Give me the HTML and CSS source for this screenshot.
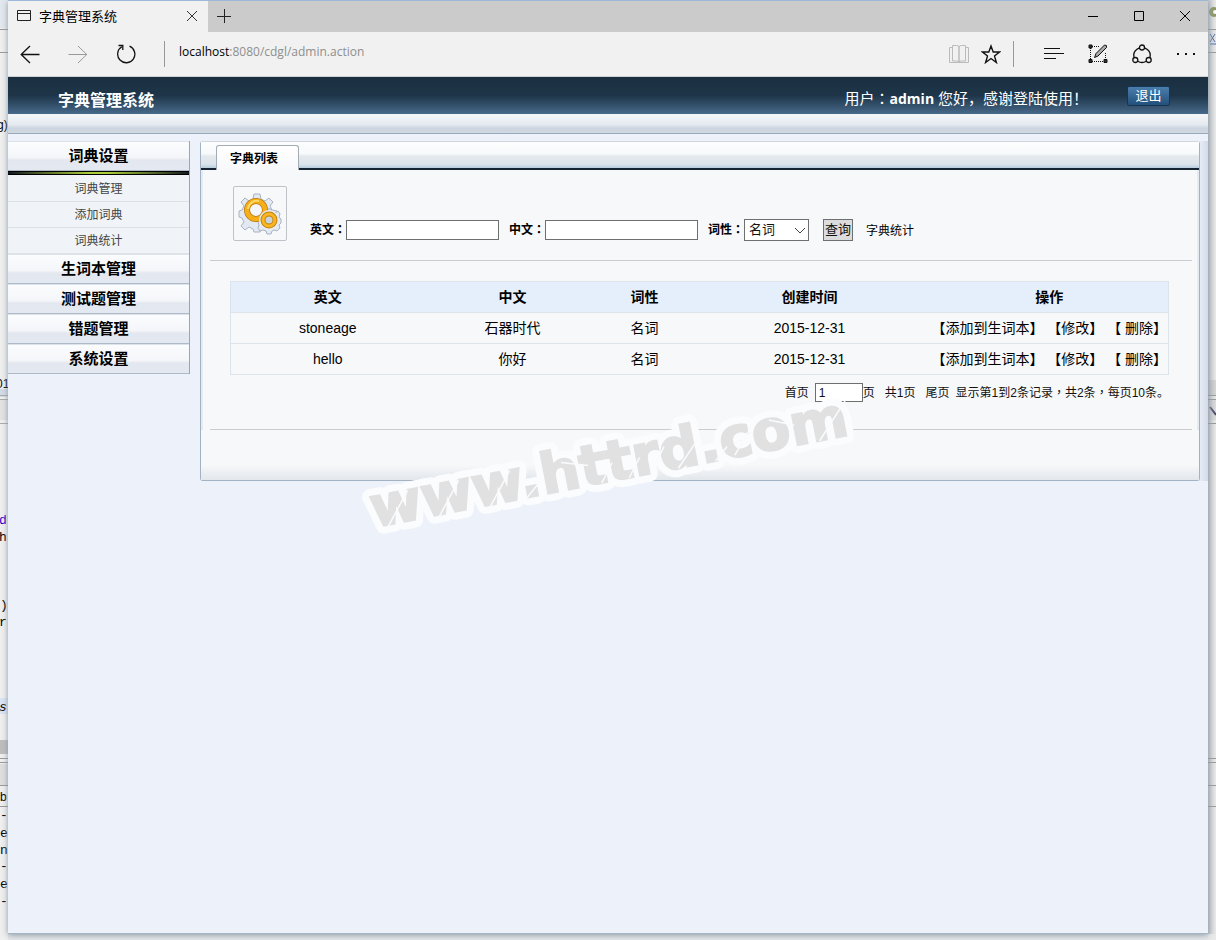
FILE: index.html
```html
<!DOCTYPE html>
<html lang="zh-CN">
<head>
<meta charset="utf-8">
<title>字典管理系统</title>
<link rel="stylesheet" href="styles.css">
</head>
<body>
<div class="desktop">
  <svg class="strip" viewBox="0 0 8 940" width="8" height="940" aria-hidden="true">
    <rect width="8" height="940" fill="#efefef"/>
    <rect width="8" height="28" fill="#e2e8ee"/>
    <path d="M0 29.5h8M0 52.5h8" stroke="#999"/>
    <rect y="389" width="8" height="8" fill="#d3dbe6"/>
    <rect y="400" width="8" height="20" fill="#e2e2e2"/>
    <path d="M0 395.5h8M0 399.5h8M0 423.5h8" stroke="#aaa"/>
    <rect y="698" width="8" height="16" fill="#dae4f3"/>
    <rect y="740" width="8" height="14" fill="#bdbdbd"/>
    <rect y="764" width="8" height="22" fill="#dedede"/>
    <path d="M0 758.5h8M0 762.5h8M0 785.5h8M0 806.5h8" stroke="#999"/>
    <g font-family="Liberation Sans, sans-serif" font-size="12"><text x="-3" y="129">g)</text><text x="-4" y="388">01</text><text x="0" y="801">b</text></g>
    <g font-family="Liberation Mono, monospace" font-size="13"><text x="-1" y="524" fill="#2a00c8">d</text><text x="-1" y="541">h</text><text x="0" y="609">)</text><text x="-1" y="626">r</text><text x="-1" y="711" font-style="italic">s</text><text x="0" y="819">-</text><text x="0" y="837">e</text><text x="0" y="854">n</text><text x="0" y="870">-</text><text x="0" y="888">e</text><text x="0" y="905">-</text></g>
  </svg>
  <div class="window">
    <div class="tabbar">
      <div class="tab">
        <svg width="14" height="13" viewBox="0 0 14 13" fill="none" stroke="#222"><path d="M.5 1.500h13v10H.5zM.5 4.500h13"/></svg>
        <span class="tab-title">字典管理系统</span>
        <button class="icon-btn" aria-label="关闭标签页"><svg width="12" height="12" viewBox="0 0 12 12" fill="none" stroke="#333"><path d="M1 1l10 10M11 1L1 11"/></svg></button>
      </div>
      <button class="icon-btn new-tab" aria-label="新建标签页"><svg width="14" height="14" viewBox="0 0 14 14" fill="none" stroke="#222"><path d="M7.500 0v14M0 7.500h14"/></svg></button>
      <div class="win-controls">
        <button class="icon-btn" aria-label="最小化"><svg width="12" height="12" viewBox="0 0 12 12" stroke="#000"><path d="M1 6.500h10"/></svg></button>
        <button class="icon-btn" aria-label="最大化"><svg width="12" height="12" viewBox="0 0 12 12" fill="none" stroke="#000"><path d="M1.500 1.500h9v9h-9z"/></svg></button>
        <button class="icon-btn" aria-label="关闭"><svg width="12" height="12" viewBox="0 0 12 12" fill="none" stroke="#000"><path d="M1 1l10 10M11 1L1 11"/></svg></button>
      </div>
    </div>
    <div class="toolbar">
      <div class="nav">
        <button class="icon-btn" aria-label="后退"><svg width="20" height="20" viewBox="0 0 20 20" fill="none" stroke="#111" stroke-width="1.300"><path d="M19.500 10.500H1M10 2L1.200 10.500l8.800 8.500"/></svg></button>
        <button class="icon-btn" aria-label="前进"><svg width="20" height="20" viewBox="0 0 20 20" fill="none" stroke="#999"><path d="M.5 10.500H19M10 2l8.800 8.500L10 19"/></svg></button>
        <button class="icon-btn" aria-label="刷新"><svg width="20" height="20" viewBox="0 0 20 20" fill="none" stroke="#111" stroke-width="1.300"><path d="M13.500 2.200A8.600 8.600 0 1 1 5.800 2.800M2.500 1.500h4.300v4.400"/></svg></button>
      </div>
      <i class="divider"></i>
      <div class="address">localhost<span class="path">:8080/cdgl/admin.action</span></div>
      <div class="page-tools">
        <button class="icon-btn" aria-label="阅读视图"><svg width="20" height="20" viewBox="0 0 20 20" fill="none" stroke="#bbb"><path d="M3.500 1.500h4q2.500 0 2.500 1.500v15q0-1-2.500-1h-4zM16.500 1.500h-4Q10 1.500 10 3v15q0-1 2.500-1h4zM3.500 3.500h-3v15h19v-15h-3"/></svg></button>
        <button class="icon-btn" aria-label="收藏"><svg width="20" height="20" viewBox="0 0 20 20" fill="none" stroke="#111" stroke-width="1.400"><path d="M10 2l2.200 6h6.300l-5 4 1.900 6.500-5.400-4-5.400 4 1.900-6.500-5-4h6.300z"/></svg></button>
      </div>
      <i class="divider"></i>
      <div class="menu-tools">
        <button class="icon-btn" aria-label="中心"><svg width="20" height="20" viewBox="0 0 20 20" stroke="#111"><path d="M0 4.500h16M0 9.500h20M0 14.500h12"/></svg></button>
        <button class="icon-btn" aria-label="做笔记"><svg width="20" height="20" viewBox="0 0 20 20" fill="none" stroke="#111"><path d="M4 2.500h8M2.500 4v12M4 17.500h12M17.500 9v7" stroke-dasharray="1 1"/><path d="M1 1h3v3H1zM1 15.500h3v3H1zM16 15.500h3v3h-3z" fill="#333"/><path d="M6.500 13.500L8 9.500l8.500-8.500q3 0 2 2.500L10 12z" fill="#aaa"/></svg></button>
        <button class="icon-btn" aria-label="分享"><svg width="20" height="20" viewBox="0 0 20 20" fill="none" stroke="#111" stroke-width="1.300"><circle cx="10" cy="3.500" r="2.500"/><circle cx="3.300" cy="16" r="2.500"/><circle cx="16.700" cy="16" r="2.500"/><path d="M7.500 3.800Q.2 7 2.200 13.700M12.500 3.800Q19.800 7 17.800 13.700M5.800 17.200q4.200 2.600 8.400 0"/></svg></button>
        <button class="icon-btn" aria-label="更多操作"><svg width="20" height="20" viewBox="0 0 20 20" fill="#111"><path d="M1 9h2v2H1zM9 9h2v2H9zM17 9h2v2h-2z"/></svg></button>
      </div>
    </div>

    <header class="header">
      <h1 class="brand">字典管理系统</h1>
      <p class="welcome">用户<span class="colon" lang="zh-TW">：</span><strong>admin</strong> 您好，感谢登陆使用！</p>
      <button class="logout">退出</button>
    </header>
    <div class="subheader"></div>

    <div class="body">
      <nav class="sidebar">
        <button class="group">词典设置</button>
        <div class="accent"></div>
        <ul class="sub">
          <li><a href="#">词典管理</a></li>
          <li><a href="#">添加词典</a></li>
          <li><a href="#">词典统计</a></li>
        </ul>
        <button class="group">生词本管理</button>
        <button class="group">测试题管理</button>
        <button class="group">错题管理</button>
        <button class="group">系统设置</button>
      </nav>
      <main class="main">
        <section class="panel">
          <div class="panel-head"><h2 class="panel-tab">字典列表</h2></div>
          <form class="search">
            <div class="gear">
              <svg width="44" height="44" viewBox="0 0 44 44">
                <g stroke="#aab3c0" fill="#e3e9f2">
                  <path d="M16 2h6l1 5 4 2 4-3 4 4-3 4 2 4 5 1v6l-5 1-2 4 3 4-4 4-4-3-4 2-1 3h-6l-1-3-4-2-4 3-4-4 3-4-2-4-3-1v-6l3-1 2-4-3-4 4-4 4 3 4-2z"/>
                  <path d="M29 17h4l1 3 3 1 3-2 2 3-1 3 2 2v4l-2 2 1 3-3 3-3-1-2 1-1 3h-4l-1-3-3-1-3 1-2-3 1-3-1-3-2-2 1-3 3-1 2-3v-2l2-1 2 1z"/>
                </g>
                <circle cx="18" cy="18" r="9" fill="#f4f6fa" stroke="#b97908" stroke-width="6"/>
                <circle cx="18" cy="18" r="9" fill="none" stroke="#f6ae1b" stroke-width="4.500"/>
                <path d="M10 17a9 9 0 0 1 11-8" fill="none" stroke="#ffd868" stroke-width="2"/>
                <circle cx="31" cy="28" r="10" fill="#e9edf4"/>
                <circle cx="31" cy="28" r="6" fill="#ccd3dc" stroke="#c28108" stroke-width="5"/>
                <circle cx="31" cy="28" r="6" fill="none" stroke="#f8b524" stroke-width="3"/>
              </svg>
            </div>
            <div class="field"><label for="en">英文<span class="colon" lang="zh-TW">：</span></label><input class="box" id="en" type="text"></div>
            <div class="field"><label for="zh">中文<span class="colon" lang="zh-TW">：</span></label><input class="box" id="zh" type="text"></div>
            <div class="field"><label for="pos">词性<span class="colon" lang="zh-TW">：</span></label><span class="select-wrap"><select class="box" id="pos"><option>名词</option></select><svg class="chevron" width="12" height="8" viewBox="0 0 12 8" fill="none" stroke="#444"><path d="M1 1l5 5 5-5"/></svg></span></div>
            <button class="query" type="button">查询</button>
            <a class="stats" href="#">字典统计</a>
          </form>
          <div class="results">
            <table class="list">
              <colgroup><col class="c-en"><col class="c-zh"><col class="c-pos"><col class="c-date"><col class="c-act"></colgroup>
              <thead><tr><th>英文</th><th>中文</th><th>词性</th><th>创建时间</th><th>操作</th></tr></thead>
              <tbody>
                <tr><td>stoneage</td><td>石器时代</td><td>名词</td><td>2015-12-31</td><td><a href="#">【添加到生词本】</a> <a href="#">【修改】</a> <a href="#">【 删除】</a></td></tr>
                <tr><td>hello</td><td>你好</td><td>名词</td><td>2015-12-31</td><td><a href="#">【添加到生词本】</a> <a href="#">【修改】</a> <a href="#">【 删除】</a></td></tr>
              </tbody>
            </table>
            <div class="pager">
              <a href="#">首页</a>
              <label class="page-no"><input class="page-input" type="text" value="1">页</label>
              <span>共1页</span>
              <a href="#">尾页</a>
              <span class="summary">显示第1到2条记录<span class="colon" lang="zh-TW">，</span>共2条<span class="colon" lang="zh-TW">，</span>每页10条。</span>
            </div>
          </div>
          <div class="panel-foot"></div>
        </section>
      </main>
    </div>
    <svg class="watermark" width="520" height="160" viewBox="0 0 520 160">
      <g transform="rotate(-11 18 137)">
        <text class="mark mark-edge" x="16" y="137">www.httrd.com</text>
        <text class="mark" x="16" y="137">www.httrd.com</text>
        <path d="M30 139l26-32M82 139l26-32M134 139l26-32M212 109l26 8M248 137l14-18M276 137l14-18M298 137l18-24M326 137l28-28M172 137l14-12M364 137l14-12M384 135l24-28M424 107l24 10M470 137l34-36" stroke="#fafbfd" stroke-width="1.500"/>
      </g>
    </svg>
  </div>
  <svg class="strip" viewBox="0 0 8 940" width="8" height="940" aria-hidden="true">
    <rect width="8" height="940" fill="#e9e9e9"/>
    <circle cx="6" cy="12" r="5" fill="#8a9659"/><circle cx="7" cy="12" r="2" fill="#fff"/>
    <path d="M2 34l5 8M7 34l-5 8M2 44h6" stroke="#4565a5" fill="none"/>
    <rect y="380" width="8" height="16" fill="#d5d5d5"/><rect y="400" width="8" height="20" fill="#dcdcdc"/>
    <path d="M0 29.500h8M0 52.500h8M0 395.500h8M0 399.500h8M0 423.500h8M0 758.500h8M0 762.500h8M0 785.500h8M0 806.500h8" stroke="#999"/>
    <path d="M2 407l6 8" stroke="#446" stroke-width="2"/>
    <linearGradient id="shade"><stop offset="0" stop-color="#8f9ba5" stop-opacity=".5"/><stop offset="1" stop-color="#aaa" stop-opacity="0"/></linearGradient>
    <rect width="8" height="934" fill="url(#shade)"/>
  </svg>
</div>
</body>
</html>
```

FILE: styles.css
```css
* { box-sizing: border-box; }
body {
  margin: 0;
  font: 12px "Liberation Sans", "Noto Sans CJK SC", sans-serif;
  color: #111;
  background: #e4e6e8;
}
a { color: inherit; text-decoration: none; }
h1, h2, p, ul { margin: 0; padding: 0; }
button, input, select { font: inherit; color: inherit; }
svg { display: block; }

.desktop { display: flex; height: 100vh; overflow: hidden; }
.strip { flex: none; }
.window {
  position: relative;
  flex: 1;
  min-width: 0;
  display: flex;
  flex-direction: column;
  margin-bottom: 7px;
  background: #ecf1fa;
  box-shadow: 0 1px 0 #9fb6c6, 0 2px 6px #8a98a5;
}
.icon-btn {
  display: flex;
  align-items: center;
  justify-content: center;
  padding: 0;
  border: 0;
  background: none;
}

.tabbar {
  display: flex;
  height: 32px;
  flex: none;
  padding-bottom: 1px;
  background: #cbcbcb;
  border-top: 1px solid #9db9d8;
}
.tab {
  display: flex;
  align-items: center;
  gap: 8px;
  width: 200px;
  margin-bottom: -1px;
  padding: 0 10px 2px 9px;
  background: #f1f1f1;
}
.tab-title { flex: 1; font-size: 13px; color: #000; }
.new-tab { width: 32px; }
.win-controls { display: flex; margin-left: auto; }
.win-controls .icon-btn { width: 46px; }

.toolbar {
  display: flex;
  align-items: center;
  flex: none;
  height: 45px;
  padding-right: 12px;
  background: #f1f1f1;
  border-bottom: 1px solid #cdd2d6;
}
.nav { display: flex; gap: 28px; padding: 0 28px 0 12px; }
.divider { width: 1px; height: 26px; background: #999; }
.address {
  flex: 1;
  padding: 0 0 4px 14px;
  font: 12px/20px "Open Sans", sans-serif;
  color: #000;
}
.path { color: #8e8e8e; }
.page-tools { display: flex; gap: 12px; padding-right: 12px; }
.menu-tools { display: flex; gap: 24px; padding-left: 30px; }

.header {
  display: flex;
  align-items: center;
  flex: none;
  height: 37px;
  padding: 5px 38px 0 50px;
  color: #fff;
  background: linear-gradient(#1a2f40, #1e3549 50%, #47698a);
}
.brand { flex: 1; font-size: 16px; line-height: 24px; padding-top: 6px; }
.welcome {
  padding-right: 39px;
  font: 15px/24px "Open Sans", "Noto Sans CJK SC", sans-serif;
}
.welcome strong { font-size: 14px; }
.colon { font-family: "Noto Sans CJK TC", sans-serif; line-height: 1; }
.logout {
  width: 43px;
  height: 20px;
  padding: 0;
  margin-bottom: 4px;
  font-size: 13px;
  line-height: 18px;
  background: linear-gradient(#4a7eac, #23507c);
  border: 1px solid #173553;
  border-radius: 2px;
}
.subheader {
  flex: none;
  height: 20px;
  background: linear-gradient(#f5f6f8, #e6ebf1 55%, #ccd5df 75%, #d0d8e2);
  border-bottom: 1px solid #9aa9bb;
}

.body { display: flex; align-items: flex-start; gap: 10px; padding-top: 7px; }
.sidebar { width: 182px; flex: none; border-right: 1px solid #9ba6b5; }
.group {
  display: block;
  width: 100%;
  height: 30px;
  padding: 0;
  font-size: 15px;
  font-weight: bold;
  line-height: 26px;
  color: #000;
  border: solid;
  border-width: 1px 0;
  border-color: #dde3eb #dde3eb #aebac9;
  background: linear-gradient(#fbfcfe, #f5f6f9 55%, #e3e7ef 65%, #e4e8f0);
}
.accent {
  height: 4px;
  border-top: 1px solid #000;
  border-bottom: 1px solid #000;
  background: linear-gradient(90deg, #101820, #a8cf38 45%, #a8cf38 55%, #101820);
}
.sub { list-style: none; padding-top: 1px; background: #f0f4f8; }
.sub li {
  height: 26px;
  line-height: 27px;
  text-align: center;
  color: #444;
  border-bottom: 1px solid #dce2e8;
}

.main {
  flex: 1;
  min-width: 0;
  padding-right: 8px;
  background: linear-gradient(90deg, #ecf1fa 99%, #d4dae8);
}
.panel {
  border: 1px solid #a3b2c2;
  border-top-color: #cfd6de;
  border-radius: 3px;
  background: #f7f8fa;
  box-shadow: inset 2px 0 #e4ebf2, inset -2px 0 #e4ebf2;
}
.panel-head {
  display: flex;
  align-items: flex-end;
  height: 28px;
  padding-left: 15px;
  background: linear-gradient(#fdfefe, #f7f9fa 45%, #e5e9ed 55%, #dbe5ec 85%, #b7cedd);
  border-bottom: 2px solid #152433;
}
.panel-tab {
  position: relative;
  width: 83px;
  height: 25px;
  margin-bottom: -2px;
  font-size: 12px;
  line-height: 26px;
  text-align: center;
  padding-right: 7px;
  color: #000;
  background: linear-gradient(#fff, #f7f8fa);
  border: solid #a3abb3;
  border-width: 1px 1px 0;
  border-radius: 3px 3px 0 0;
}
.search {
  display: flex;
  align-items: flex-end;
  margin: 0 7px 0 9px;
  padding: 16px 0 19px 23px;
  border-bottom: 1px solid #c9cdd1;
}
.gear {
  display: flex;
  align-items: center;
  justify-content: center;
  width: 54px;
  height: 55px;
  margin-right: 23px;
  border: 1px solid #bfc2c6;
  border-radius: 2px;
}
.field { display: flex; align-items: center; height: 22px; margin-right: 10px; }
.field label { font-weight: bold; color: #000; line-height: 18px; }
.box {
  width: 153px;
  height: 20px;
  padding: 0 4px;
  border: 1px solid #6d706e;
  border-radius: 0;
  background: #fff;
}
.select-wrap { position: relative; }
.select-wrap .box {
  display: block;
  width: 65px;
  height: 22px;
  font-size: 13px;
  line-height: 20px;
  appearance: none;
}
.chevron { position: absolute; right: 3px; top: 8px; pointer-events: none; }
.query {
  width: 30px;
  height: 22px;
  margin: 0 13px 0 4px;
  padding: 0;
  font-size: 13px;
  line-height: 18px;
  background: #dcdcdc;
  border: 1px solid #6d706e;
}
.stats { line-height: 20px; color: #000; }

.results {
  margin: 0 7px 0 9px;
  padding: 20px 23px 27px 20px;
  border-bottom: 1px solid #c9cdd1;
}
.list {
  width: 100%;
  table-layout: fixed;
  border-collapse: collapse;
  border: 1px solid #dde3ea;
  font-size: 14px;
  line-height: 20px;
  color: #000;
}
.list tr { height: 31px; border-bottom: 1px solid #dde3ea; }
.list th { background: #e5effc; }
.list th, .list td { padding: 0; text-align: center; white-space: nowrap; }
.c-en { width: 194px; }
.c-zh { width: 176px; }
.c-pos { width: 88px; }
.c-date { width: 242px; }
.c-act { width: 238px; }
.pager {
  display: flex;
  align-items: center;
  justify-content: flex-end;
  gap: 10px;
  height: 27px;
  padding-top: 8px;
  line-height: 18px;
}
.page-no { display: flex; align-items: center; margin-left: -4px; }
.page-input {
  width: 48px;
  height: 19px;
  padding: 0 3px;
  border: 1px solid #6d706e;
  background: #fff;
}
.summary { margin-left: -4px; }
.panel-foot { height: 50px; background: linear-gradient(#f7f8fa 70%, #e2e7eb); }

.watermark { position: absolute; left: 350px; top: 390px; pointer-events: none; }
.mark {
  font: bold 56px "DejaVu Sans", sans-serif;
  fill: #e1e1e2;
  stroke: #e1e1e2;
  stroke-width: 2px;
}
.mark-edge { stroke: #fbfcfe; stroke-width: 16px; stroke-linejoin: round; }
```
